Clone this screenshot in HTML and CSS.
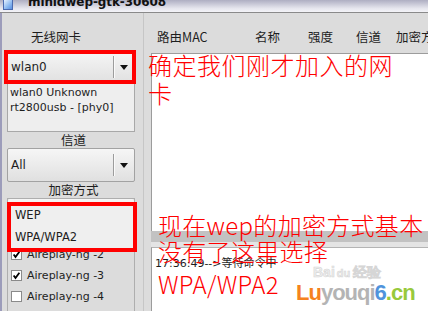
FILE: index.html
```html
<!DOCTYPE html>
<html>
<head>
<meta charset="utf-8">
<link rel="stylesheet" href="styles.css">
</head>
<body>
<div class="window">
  <div class="titlebar"><span class="app-icon"></span><span class="title">minidwep-gtk-30608</span></div>
  <div class="main">
    <div class="left">
      <div class="head-label">无线网卡</div>
      <div class="combo"><span class="combo-text">wlan0</span><span class="combo-sep"></span><span class="combo-arrow"></span></div>
      <div class="info">wlan0 Unknown<br>rt2800usb - [phy0]</div>
      <div class="label">信道</div>
      <div class="combo"><span class="combo-text">All</span><span class="combo-sep"></span><span class="combo-arrow"></span></div>
      <div class="label">加密方式</div>
      <div class="frame">
        <div class="combo inner"><span class="combo-text"></span><span class="combo-sep"></span><span class="combo-arrow"></span></div>
        <div class="check-row"><span class="check"><svg viewBox="0 0 11 11"><path d="M2 5.5 L4.3 8.5 L9 2.2" fill="none" stroke="#000" stroke-width="2.2"/></svg></span>Aireplay-ng -2</div>
        <div class="check-row"><span class="check"><svg viewBox="0 0 11 11"><path d="M2 5.5 L4.3 8.5 L9 2.2" fill="none" stroke="#000" stroke-width="2.2"/></svg></span>Aireplay-ng -3</div>
        <div class="check-row"><span class="check"></span>Aireplay-ng -4</div>
        <div class="check-row"><span class="check"></span>Aireplay-ng -5</div>
      </div>
    </div>
    <div class="right">
      <div class="cols">
        <span class="col c1">路由MAC</span>
        <span class="col c2">名称</span>
        <span class="col c3">强度</span>
        <span class="col c4">信道</span>
        <span class="col c5">加密方式</span>
      </div>
      <div class="list"></div>
      <div class="pane-sep"></div>
      <div class="log">17:36:49--&gt;等待命令中</div>
    </div>
  </div>

  <div class="redbox box1"></div>
  <div class="redbox popup">
    <div class="pop-item first">WEP</div>
    <div class="pop-item">WPA/WPA2</div>
  </div>

  <div class="note note1">确定我们刚才加入的网<br>卡</div>
  <div class="note note2">现在wep的加密方式基本<br>没有了这里选择<div class="note-last">WPA/WPA2</div></div>

  <div class="watermark">
    <div class="wm-baidu">Bai<span class="du">du</span>经验</div>
    <div class="wm-site"><span class="wo">Lu</span><span class="wg">youqi</span><span class="wb">6</span><span class="wgr">.cn</span></div>
  </div>
</div>
</body>
</html>
```
FILE: styles.css
```css
html, body {
  margin: 0;
  padding: 0;
}
body {
  width: 428px;
  height: 311px;
  overflow: hidden;
  background: #dcdcdc;
  font-family: "DejaVu Sans", "Noto Sans CJK SC", sans-serif;
  color: #1e1e1e;
}
.window {
  position: relative;
  width: 428px;
  height: 311px;
  overflow: hidden;
}
.titlebar {
  height: 12px;
  border-bottom: 1px solid #8a8a8a;
  background: linear-gradient(#aeaec2, #e6e6ee 70%, #f4f4f8);
  overflow: hidden;
  display: flex;
  align-items: flex-start;
}
.app-icon {
  display: block;
  width: 8px;
  height: 9px;
  margin-left: 3px;
  margin-top: -1px;
  border: 1px solid #4a6ab0;
  background: linear-gradient(135deg, #e8f2ff, #8ab8f0 60%, #5a8ee0);
}
.title {
  margin-left: 15px;
  margin-top: -4px;
  font-weight: bold;
  font-size: 12px;
  line-height: 13px;
  color: #111;
  letter-spacing: -0.1px;
}
.main {
  display: flex;
  height: 298px;
  border-left: 2px solid #9c9cba;
}
.left {
  width: 133px;
  padding-left: 5px;
  padding-right: 3px;
  border-right: 1px solid #c6c6c6;
  flex: none;
}
.head-label {
  padding-top: 11px;
  height: 26px;
  line-height: 26px;
  padding-left: 24px;
  font-size: 12.5px;
  font-family: "Noto Sans CJK SC", sans-serif;
}
.combo {
  position: relative;
  box-sizing: border-box;
  width: 128px;
  height: 34px;
  border: 1px solid #a2a2a2;
  border-radius: 2px;
  background: linear-gradient(#f6f6f6, #e0e0e0);
  display: flex;
  align-items: center;
}
.combo-text {
  flex: 1;
  padding-left: 3px;
  font-size: 12px;
}
.combo-sep {
  width: 1px;
  height: 22px;
  background: #9c9c9c;
  box-shadow: 1px 0 0 #fafafa;
  margin-right: 6px;
}
.combo-arrow {
  width: 0;
  height: 0;
  border-left: 4px solid transparent;
  border-right: 4px solid transparent;
  border-top: 5px solid #111;
  margin-right: 6px;
}
.info {
  box-sizing: border-box;
  width: 128px;
  height: 48px;
  border: 1px solid #a8a8a8;
  border-top: none;
  background: #eeeeee;
  font-size: 11px;
  line-height: 15px;
  padding: 1px 2px;
  white-space: nowrap;
}
.label {
  height: 16px;
  line-height: 16px;
  text-align: center;
  font-size: 12.5px;
  font-family: "Noto Sans CJK SC", sans-serif;
}
.frame {
  box-sizing: border-box;
  width: 128px;
  height: 130px;
  border: 1px solid #aeaeae;
  border-bottom: none;
}
.combo.inner {
  width: 126px;
  border: none;
  border-bottom: 1px solid #b0b0b0;
  margin-bottom: 11px;
}
.check-row {
  height: 21px;
  display: flex;
  align-items: center;
  font-size: 11px;
  padding-left: 3px;
}
.check {
  box-sizing: border-box;
  width: 11px;
  height: 11px;
  border: 1px solid #8a8a8a;
  background: #fff;
  margin-right: 5px;
  display: flex;
}
.check svg {
  width: 9px;
  height: 9px;
}
.right {
  flex: 1;
  margin-left: 7px;
  display: flex;
  flex-direction: column;
}
.cols {
  height: 40px;
  display: flex;
  padding-left: 6px;
  font-family: "Noto Sans CJK SC", sans-serif;
  font-size: 12.5px;
  white-space: nowrap;
}
.col {
  padding-top: 16px;
  line-height: 16px;
  flex: none;
}
.c1 { width: 98px; }
.c2 { width: 53px; }
.c3 { width: 48px; }
.c4 { width: 40px; }
.list {
  height: 177px;
  background: #fff;
  border-top: 1px solid #9c9c9c;
  border-left: 1px solid #9c9c9c;
}
.pane-sep {
  height: 11px;
  background: #c2c2c2;
  border-bottom: 5px solid #e4e4e4;
}
.log {
  flex: 1;
  background: #fff;
  border-left: 1px solid #9c9c9c;
  border-top: 1px solid #b4b4b4;
  padding-top: 9px;
  padding-left: 3px;
  font-size: 11px;
  line-height: 14px;
  white-space: nowrap;
}
.redbox {
  position: absolute;
  box-sizing: border-box;
  border: 4px solid #ff0000;
}
.box1 {
  left: 4px;
  top: 50px;
  width: 132px;
  height: 34px;
}
.popup {
  left: 7px;
  top: 202px;
  width: 130px;
  height: 50px;
  background: #efefef;
  padding-left: 4px;
  font-size: 11.5px;
  line-height: 22px;
}
.pop-item.first {
  margin-top: -2px;
}
.note {
  position: absolute;
  color: #ff0000;
  font-family: "Noto Sans CJK SC", sans-serif;
  font-weight: 300;
  font-size: 24px;
  white-space: nowrap;
}
.note1 {
  left: 148px;
  top: 51px;
  line-height: 28px;
  letter-spacing: 0.5px;
}
.note2 {
  left: 158px;
  top: 212px;
  line-height: 26px;
  letter-spacing: 0.3px;
}
.note-last {
  margin-top: 8px;
  line-height: 24px;
}
.watermark {
  position: absolute;
  left: 296px;
  top: 264px;
  width: 130px;
}
.wm-baidu {
  padding-left: 17px;
  font-family: "Liberation Sans", sans-serif;
  font-weight: bold;
  font-size: 14px;
  line-height: 16px;
  color: #eeeeee;
  -webkit-text-stroke: 0.6px #d6d6d6;
  white-space: nowrap;
}
.wm-baidu .du {
  font-size: 11px;
  margin: 0 3px 0 2px;
}
.wm-site {
  font-family: "Liberation Sans", sans-serif;
  font-weight: bold;
  font-size: 22px;
  line-height: 24px;
  letter-spacing: -1px;
  white-space: nowrap;
}
.wo { color: #f58220; }
.wg { color: #b4b4b4; }
.wb { color: #4f93dc; }
.wgr { color: #98c93c; }
```
